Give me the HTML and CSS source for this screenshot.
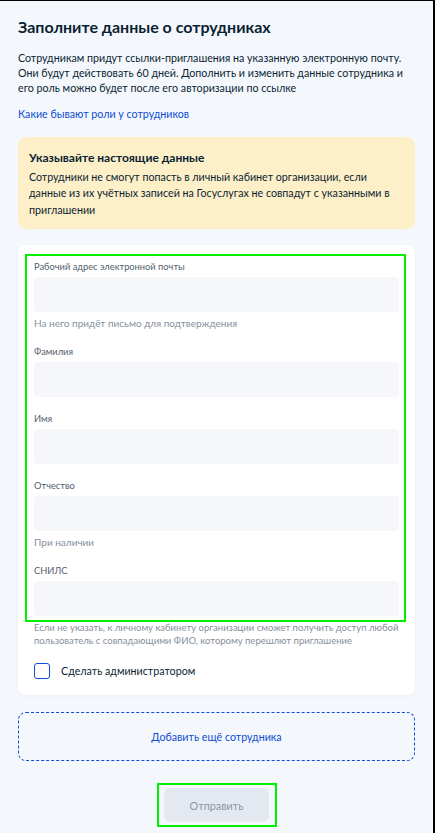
FILE: index.html
```html
<!DOCTYPE html>
<html lang="ru">
<head>
    <meta charset="UTF-8">
    <meta name="viewport" content="width=device-width, initial-scale=1.0">
    <title>Заполните данные о сотрудниках</title>
    <link rel="stylesheet" href="styles.css">
</head>
<body>
    <main class="page">
        <!-- Intro -->
        <h1 class="page-title">Заполните данные о сотрудниках</h1>
        <p class="intro">Сотрудникам придут ссылки-приглашения на указанную электронную почту. Они будут действовать 60 дней. Дополнить и изменить данные сотрудника и его роль можно будет после его авторизации по ссылке</p>
        <a class="roles-link" href="#roles">Какие бывают роли у сотрудников</a>

        <!-- Warning -->
        <div class="notice">
            <h3 class="notice-title">Указывайте настоящие данные</h3>
            <p class="notice-text">Сотрудники не смогут попасть в личный кабинет организации, если данные из их учётных записей на Госуслугах не совпадут с указанными в приглашении</p>
        </div>

        <!-- Employee form -->
        <form class="employee-card">
            <div class="fields">
                <div class="field">
                    <label for="email">Рабочий адрес электронной почты</label>
                    <input type="email" id="email" name="email">
                    <span class="hint">На него придёт письмо для подтверждения</span>
                </div>
                <div class="field">
                    <label for="surname">Фамилия</label>
                    <input type="text" id="surname" name="surname">
                </div>
                <div class="field">
                    <label for="name">Имя</label>
                    <input type="text" id="name" name="name">
                </div>
                <div class="field">
                    <label for="patronymic">Отчество</label>
                    <input type="text" id="patronymic" name="patronymic">
                    <span class="hint">При наличии</span>
                </div>
                <div class="field">
                    <label for="snils">СНИЛС</label>
                    <input type="text" id="snils" name="snils">
                </div>
            </div>
            <p class="snils-hint">Если не указать, к личному кабинету организации сможет получить доступ любой пользователь с совпадающими ФИО, которому перешлют приглашение</p>
            <label class="admin-check">
                <input type="checkbox" name="admin">
                <span class="box"></span>
                <span>Сделать администратором</span>
            </label>
        </form>

        <button type="button" class="add-employee">Добавить ещё сотрудника</button>

        <div class="submit-row">
            <button type="submit" class="submit" disabled>Отправить</button>
        </div>
    </main>
</body>
</html>
```

FILE: styles.css
```css
/* General Styles */
* {
    box-sizing: border-box;
}

body {
    margin: 0;
    font-family: Lato, "Noto Sans", Arial, sans-serif;
    color: #0b1f33;
    background-color: #f4f8fd;
    border-top: 1px solid #000;
    border-right: 2px solid #000;
    min-height: 833px;
}

.page {
    padding: 16px 18px 20px;
    display: flex;
    flex-direction: column;
}

.page-title {
    font-size: 16px;
    line-height: 20px;
    font-weight: 700;
    margin: 0 0 12.5px;
}

.intro {
    font-size: 10.7px;
    line-height: 15px;
    margin: 0 0 11px;
}

.roles-link {
    font-size: 10.7px;
    line-height: 15px;
    color: #0d4cd3;
    text-decoration: none;
    align-self: flex-start;
    margin-bottom: 16.5px;
}

/* Warning */
.notice {
    background-color: #fdefc8;
    border-radius: 8px;
    padding: 12.5px 11px 10.5px;
    margin-bottom: 16px;
}

.notice-title {
    font-size: 12px;
    line-height: 15px;
    font-weight: 700;
    margin: 0 0 4px;
}

.notice-text {
    font-size: 10.7px;
    line-height: 16.5px;
    margin: 0;
}

/* Employee card */
.employee-card {
    background-color: #fff;
    border-radius: 8px;
    padding: 15px 16px 16px;
    box-shadow: 0 1px 4px rgba(0, 0, 0, 0.03);
}

.fields {
    position: relative;
    display: flex;
    flex-direction: column;
    gap: 15px;
}

.fields::after {
    content: "";
    position: absolute;
    top: -6px;
    left: -9px;
    right: -7px;
    bottom: -6px;
    border: 2px solid #00f000;
    pointer-events: none;
}

.field {
    display: flex;
    flex-direction: column;
}

.field label {
    font-size: 9.3px;
    line-height: 14px;
    color: #53606d;
    margin-bottom: 3px;
}

.field input {
    height: 35px;
    border: none;
    border-radius: 4px;
    background-color: #f5f7fa;
    font: inherit;
    padding: 0 10px;
}

.hint {
    font-size: 10px;
    line-height: 14px;
    color: #86909c;
    margin-top: 4px;
}

.snils-hint {
    font-size: 9.5px;
    line-height: 12.5px;
    color: #86909c;
    margin: 6.5px 0 16px;
}

.admin-check {
    display: flex;
    align-items: center;
    gap: 11px;
    font-size: 10.7px;
    line-height: 16px;
}

.admin-check input {
    display: none;
}

.admin-check .box {
    width: 16px;
    height: 16px;
    border: 1.5px solid #0d4cd3;
    border-radius: 3px;
}

/* Buttons */
.add-employee {
    margin-top: 17px;
    height: 49px;
    background: transparent;
    border: 1px dashed #0d4cd3;
    border-radius: 8px;
    color: #0d4cd3;
    font-family: inherit;
    font-size: 10.7px;
}

.submit-row {
    display: flex;
    justify-content: center;
    margin-top: 27px;
}

.submit {
    position: relative;
    width: 105px;
    height: 34px;
    border: none;
    border-radius: 6px;
    background-color: #e4e9f1;
    color: #8b96a5;
    font-family: inherit;
    font-size: 10.8px;
}

.submit::after {
    content: "";
    position: absolute;
    top: -5px;
    bottom: -5px;
    left: -7px;
    right: -8px;
    border: 2px solid #00f000;
}
```
